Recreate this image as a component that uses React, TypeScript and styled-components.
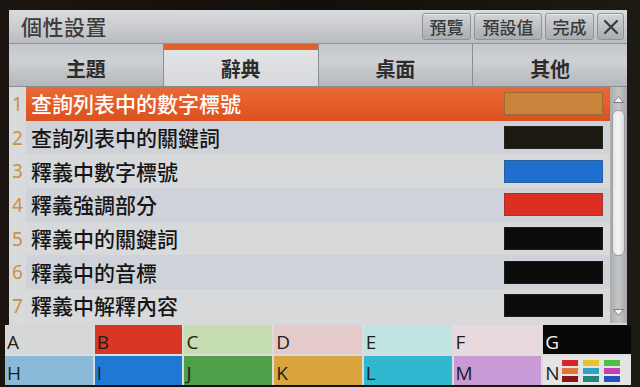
import React from "react";
import styled, { createGlobalStyle, css } from "styled-components";

const GlobalStyle = createGlobalStyle`
  html, body { margin: 0; padding: 0; background: #17120e; }
  body { font-family: "Noto Sans CJK TC", "Noto Sans", sans-serif; }
  * { box-sizing: border-box; }
`;

const Frame = styled.div`
  width: 640px;
  height: 387px;
  padding: 10px 13px 2px 9px;
  display: flex;
  flex-direction: column;
  background: linear-gradient(90deg, #1c1410 0%, #120f0c 50%, #1d1a14 100%);
  overflow: hidden;
`;

const Screen = styled.div`
  flex: 1;
  display: flex;
  flex-direction: column;
  background: #d6d8da;
`;

const TitleBar = styled.div`
  height: 34px;
  display: flex;
  align-items: center;
  padding: 0 3px 0 12px;
  background: linear-gradient(180deg, #d9dbdd 0%, #c9cbce 55%, #b9bcc0 100%);
  border-bottom: 1px solid #8e9296;
`;

const Title = styled.div`
  font-size: 21px;
  font-weight: 500;
  color: #3c3c3c;
  letter-spacing: 0.5px;
  line-height: 1;
`;

const ButtonGroup = styled.div`
  margin-left: auto;
  display: flex;
  gap: 3px;
  align-items: center;
`;

const TopButton = styled.div<{ $w: number }>`
  width: ${(p) => p.$w}px;
  height: 27px;
  display: flex;
  align-items: center;
  justify-content: center;
  font-size: 17px;
  font-weight: 500;
  color: #3a3a3a;
  border: 1px solid #8f9296;
  border-radius: 3px;
  background: linear-gradient(180deg, #d2d4d6 0%, #b9bcbf 60%, #a9acb0 100%);
  box-shadow: inset 0 1px 0 rgba(255, 255, 255, 0.5);
`;

const Tabs = styled.div`
  height: 43px;
  display: grid;
  grid-template-columns: repeat(4, 1fr);
  background: #8a8d90;
  gap: 1px;
  border-bottom: 1px solid #8a8d90;
`;

const Tab = styled.div<{ $active?: boolean }>`
  display: flex;
  align-items: center;
  justify-content: center;
  padding-top: 6px;
  font-size: 20px;
  font-weight: 700;
  color: #2c2c2c;
  ${(p) =>
    p.$active
      ? css`
          background: linear-gradient(180deg, #e1e3e5 0%, #d6d8db 100%);
          border-top: 6px solid #e2602e;
          padding-top: 0;
        `
      : css`
          background: linear-gradient(180deg, #c3c6ca 0%, #cfd1d4 40%, #b4b7bb 100%);
        `}
`;

const ListArea = styled.div`
  flex: 1;
  display: flex;
  min-height: 0;
`;

const List = styled.div`
  flex: 1;
  display: flex;
  flex-direction: column;
`;

const Row = styled.div<{ $alt?: boolean }>`
  height: 33.7px;
  display: grid;
  grid-template-columns: 17px 1fr;
  background: ${(p) => (p.$alt ? "#cfd3d9" : "#d8d9da")};
`;

const Num = styled.div`
  display: flex;
  align-items: center;
  justify-content: center;
  font-family: "Noto Sans", sans-serif;
  font-size: 19px;
  color: #c9913e;
  background: #d9dadb;
`;

const Content = styled.div<{ $selected?: boolean }>`
  display: flex;
  align-items: center;
  padding: 0 7px 0 5px;
  font-size: 21px;
  font-weight: 500;
  color: ${(p) => (p.$selected ? "#ffffff" : "#161616")};
  ${(p) =>
    p.$selected &&
    css`
      background: linear-gradient(180deg, #e86a34 0%, #e45a26 60%, #d9521f 100%);
    `}
`;

const Label = styled.span`
  flex: 1;
  line-height: 1;
`;

const Swatch = styled.div<{ $color: string }>`
  width: 99px;
  height: 23px;
  background: ${(p) => p.$color};
  border: 1px solid rgba(60, 60, 60, 0.35);
`;

const ScrollBar = styled.div`
  width: 17px;
  display: flex;
  flex-direction: column;
  align-items: center;
  padding: 8px 0 6px;
  background: linear-gradient(90deg, #a9abad 0%, #c4c6c8 50%, #a6a8aa 100%);
`;

const Thumb = styled.div`
  width: 13px;
  flex: 0 0 146px;
  margin-top: 6px;
  border-radius: 6px;
  background: linear-gradient(90deg, #e6e7e8 0%, #f4f4f4 50%, #d8d9da 100%);
  border: 1px solid #9a9c9e;
`;

const Spacer = styled.div`
  flex: 1;
`;

const ArrowIcon = styled.svg`
  display: block;
`;

const Palette = styled.div`
  margin: 2px -4px 0 -4px;
  display: grid;
  grid-template-columns: repeat(7, 1fr);
  grid-template-rows: 29px 29px;
  gap: 2px;
  background: #dcdcdc;
`;

const Cell = styled.div<{ $bg: string; $fg?: string }>`
  background: ${(p) => p.$bg};
  color: ${(p) => p.$fg || "#1d1d1d"};
  display: flex;
  align-items: flex-end;
  padding: 0 0 0 2px;
  font-family: "Open Sans", "Noto Sans", sans-serif;
  font-size: 19px;
  line-height: 1;
  gap: 2px;
`;

const Letter = styled.span`
  display: block;
  padding-bottom: 2px;
`;

const Mini = styled.div`
  display: grid;
  grid-template-columns: repeat(3, 16px);
  grid-auto-rows: 6px;
  column-gap: 5px;
  row-gap: 2px;
  margin-bottom: 3px;
`;

const MiniBar = styled.div<{ $c: string }>`
  background: ${(p) => p.$c};
`;

const rows = [
  { label: "查詢列表中的數字標號", color: "#c8843a", selected: true },
  { label: "查詢列表中的關鍵詞", color: "#1c1913" },
  { label: "釋義中數字標號", color: "#1f6fce" },
  { label: "釋義強調部分", color: "#db2f22" },
  { label: "釋義中的關鍵詞", color: "#0b0b0b" },
  { label: "釋義中的音標", color: "#0b0b0b" },
  { label: "釋義中解釋內容", color: "#0b0b0b" },
];

const palette = [
  { l: "A", bg: "#d6d8d8" },
  { l: "B", bg: "#da3626" },
  { l: "C", bg: "#c6dcb2" },
  { l: "D", bg: "#e4cbc9" },
  { l: "E", bg: "#c1e3e2" },
  { l: "F", bg: "#e8d9df" },
  { l: "G", bg: "#070707", fg: "#f2f2f2" },
  { l: "H", bg: "#8bbad8" },
  { l: "I", bg: "#1f78d2" },
  { l: "J", bg: "#4f9f4a" },
  { l: "K", bg: "#daa43e" },
  { l: "L", bg: "#2fb8cf" },
  { l: "M", bg: "#c99ad6" },
];

const mini = [
  "#d82424", "#e8c42a", "#4fc043",
  "#e0743a", "#2ea2c6", "#c43eb4",
  "#8c1414", "#22867e", "#2352c0",
];

export default function App() {
  return (
    <>
      <GlobalStyle />
      <Frame>
        <Screen>
          <TitleBar>
            <Title>個性設置</Title>
            <ButtonGroup>
              <TopButton $w={49}>預覽</TopButton>
              <TopButton $w={68}>預設值</TopButton>
              <TopButton $w={49}>完成</TopButton>
              <TopButton $w={27}>
                <svg width="16" height="16" viewBox="0 0 16 16">
                  <path d="M2 2 L14 14 M14 2 L2 14" stroke="#3a3a3a" strokeWidth="2.2" strokeLinecap="round" />
                </svg>
              </TopButton>
            </ButtonGroup>
          </TitleBar>
          <Tabs>
            <Tab>主題</Tab>
            <Tab $active>辭典</Tab>
            <Tab>桌面</Tab>
            <Tab>其他</Tab>
          </Tabs>
          <ListArea>
            <List>
              {rows.map((r, i) => (
                <Row key={i} $alt={i % 2 === 1}>
                  <Num>{i + 1}</Num>
                  <Content $selected={r.selected}>
                    <Label>{r.label}</Label>
                    <Swatch $color={r.color} />
                  </Content>
                </Row>
              ))}
            </List>
            <ScrollBar>
              <ArrowIcon width="13" height="9" viewBox="0 0 13 9">
                <path d="M1.5 7.5 L6.5 1.5 L11.5 7.5 Z" fill="#f4f4f4" stroke="#7a7c7e" strokeWidth="1" />
              </ArrowIcon>
              <Thumb />
              <Spacer />
              <ArrowIcon width="13" height="9" viewBox="0 0 13 9">
                <path d="M1.5 1.5 L6.5 7.5 L11.5 1.5 Z" fill="#f4f4f4" stroke="#7a7c7e" strokeWidth="1" />
              </ArrowIcon>
            </ScrollBar>
          </ListArea>
          <Palette>
            {palette.map((p) => (
              <Cell key={p.l} $bg={p.bg} $fg={p.fg}>
                <Letter>{p.l}</Letter>
              </Cell>
            ))}
            <Cell $bg="#e4e4e4">
              <Letter>N</Letter>
              <Mini>
                {mini.map((c, i) => (
                  <MiniBar key={i} $c={c} />
                ))}
              </Mini>
            </Cell>
          </Palette>
        </Screen>
      </Frame>
    </>
  );
}
